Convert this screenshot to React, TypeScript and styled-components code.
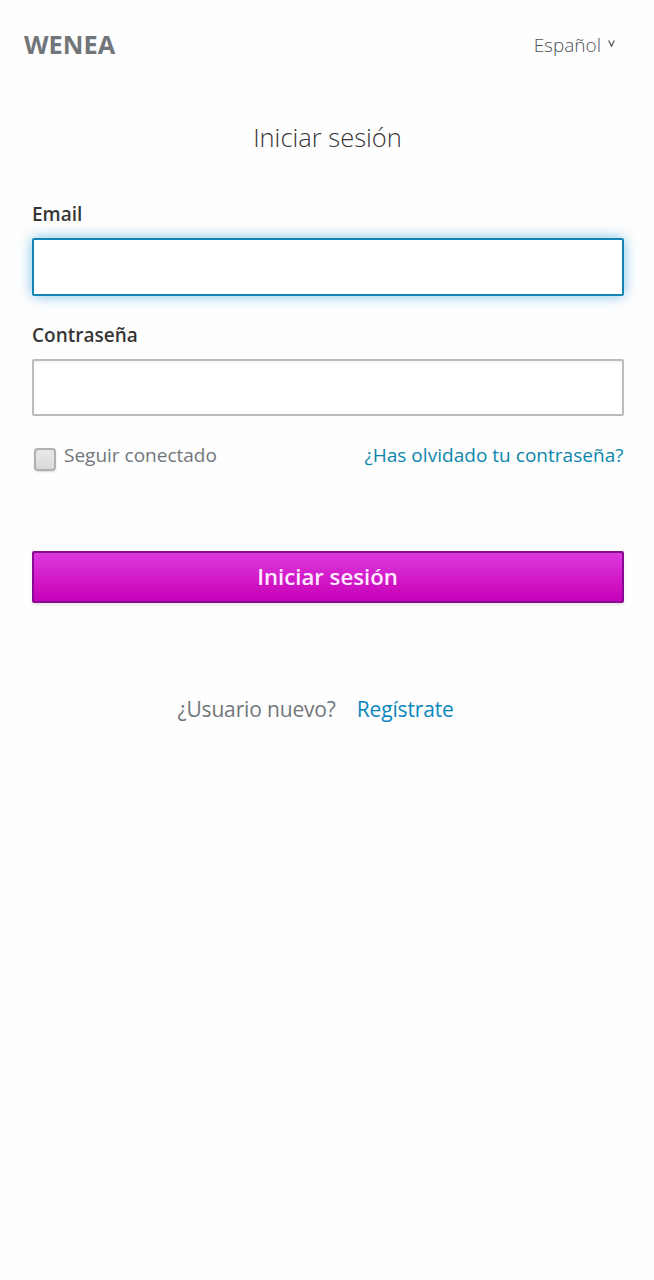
import React from 'react';
import styled, { createGlobalStyle } from 'styled-components';

const GlobalStyle = createGlobalStyle`
  * { box-sizing: border-box; }
  body { margin: 0; background: #fefefe; font-family: "Open Sans", sans-serif; color: #363636; }
`;
const Page = styled.div`
  min-height: 1280px;
  padding: 25px 30px 0 32px;
`;
const Header = styled.header`
  display: flex;
  justify-content: space-between;
  height: 39px;
  line-height: 38px;
  margin: 0 9px 0 -8px;
`;
const Brand = styled.div`
  font-size: 25.4px;
  font-weight: 700;
  color: #72767b;
`;
const Locale = styled.div`
  display: flex;
  gap: 7px;
  padding-top: 1px;
  font-size: 19px;
  font-weight: 300;
  color: #4d5258;
`;
const Caret = styled.svg`
  width: 7px;
  height: 7px;
  margin-top: 14px;
`;
const Title = styled.h1`
  margin: 54px 1px 0 0;
  text-align: center;
  font-size: 25.5px;
  font-weight: 300;
  line-height: 38px;
`;
const Field = styled.div<{ $top: number }>`
  margin-top: ${p => p.$top}px;
`;
const Label = styled.label`
  display: block;
  font-size: 19px;
  font-weight: 600;
  line-height: 28px;
`;
const Input = styled.input<{ $active?: boolean }>`
  display: block;
  width: 100%;
  height: ${p => (p.$active ? 58 : 57)}px;
  margin-top: 10px;
  outline: none;
  border: 2px solid ${p => (p.$active ? '#1484b4' : '#bbb')};
  border-radius: 2px;
  background: #fff;
  caret-color: transparent;
  box-shadow: ${p => (p.$active ? '0 0 14px rgba(0,136,206,.5)' : 'inset 0 2px 2px rgba(3,3,3,.04)')};
`;
const Options = styled.div`
  display: flex;
  justify-content: space-between;
  margin-top: 25px;
  font-size: 19px;
  line-height: 28px;
`;
const Remember = styled.label`
  display: flex;
  gap: 8px;
  color: #72767b;
`;
const Box = styled.span`
  width: 22px;
  height: 23px;
  margin: 7px 0 0 2px;
  border: 2px solid #b0b0b0;
  border-radius: 4px;
  background: linear-gradient(#e8e8e8, #dadada);
  box-shadow: 0 1px 2px rgba(0,0,0,.15);
`;
const Link = styled.a<{ $wide?: boolean }>`
  color: ${p => (p.$wide ? '#0c86ac' : '#0a86be')};
  margin-right: ${p => (p.$wide ? '.5px' : '0')};
  letter-spacing: ${p => (p.$wide ? '.03px' : 'inherit')};
`;
const Submit = styled.button`
  display: block;
  width: 100%;
  height: 52px;
  margin-top: 80px;
  padding: 0 1px 1px 0;
  border: 2px solid #860b92;
  border-radius: 2px;
  background: linear-gradient(#dc39dc, #c800b8);
  box-shadow: 0 2px 3px rgba(3,3,3,.1);
  color: #ffeaff;
  font: 600 22.2px/47px "Open Sans", sans-serif;
`;
const Signup = styled.div`
  display: flex;
  gap: 21px;
  margin: 90px 0 0 145.5px;
  font-size: 21px;
  letter-spacing: -.16px;
  line-height: 32px;
  color: #72767b;
`;

export default function App() {
  return (
    <Page>
      <GlobalStyle />
      <Header>
        <Brand>WENEA</Brand>
        <Locale>
          Español
          <Caret viewBox="0 0 7 7"><path d="M.7 .4 3.5 6.3 6.3 .4" fill="none" stroke="#4d5258" strokeWidth="1.2" /></Caret>
        </Locale>
      </Header>
      <Title>Iniciar sesión</Title>
      <Field $top={44}>
        <Label>Email</Label>
        <Input $active />
      </Field>
      <Field $top={25}>
        <Label>Contraseña</Label>
        <Input />
      </Field>
      <Options>
        <Remember><Box />Seguir conectado</Remember>
        <Link $wide>¿Has olvidado tu contraseña?</Link>
      </Options>
      <Submit>Iniciar sesión</Submit>
      <Signup>
        <span>¿Usuario nuevo?</span>
        <Link>Regístrate</Link>
      </Signup>
    </Page>
  );
}
